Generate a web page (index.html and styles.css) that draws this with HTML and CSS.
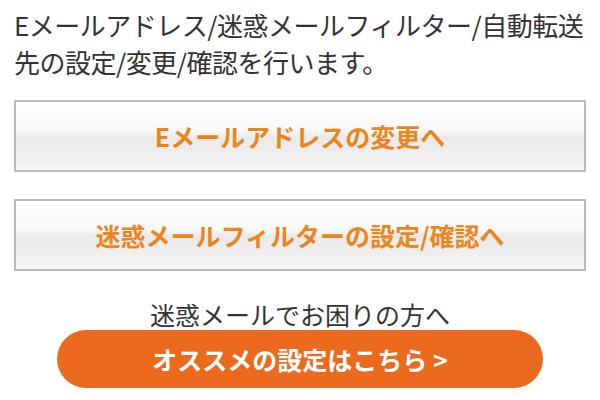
FILE: index.html
```html
<!DOCTYPE html>
<html lang="ja">
<head>
<meta charset="utf-8">
<link rel="stylesheet" href="styles.css">
</head>
<body>
<div class="page">
  <p class="intro">Eメールアドレス/迷惑メールフィルター/自動転送先の設定/変更/確認を行います。</p>
  <a class="btn">Eメールアドレスの変更へ</a>
  <a class="btn">迷惑メールフィルターの設定/確認へ</a>
  <p class="note">迷惑メールでお困りの方へ</p>
  <a class="pill">オススメの設定はこちら &gt;</a>
</div>
</body>
</html>
```
FILE: styles.css
```css
html, body {
  margin: 0;
  padding: 0;
  background: #fff;
}
.page {
  font-family: "Noto Sans CJK JP", "Noto Sans", sans-serif;
  display: flex;
  flex-direction: column;
  padding-top: 6px;
}
.intro {
  margin: 0;
  padding: 0 0 0 14px;
  font-size: 26px;
  line-height: 37px;
  letter-spacing: -0.5px;
  color: #333;
}
.btn {
  display: flex;
  align-items: center;
  justify-content: center;
  box-sizing: border-box;
  height: 72px;
  margin: 20px 14px 0 14px;
  border: 2px solid #b9b9b9;
  background: linear-gradient(to bottom, #fefefe 0%, #f8f8f8 42%, #eaeaea 52%, #eeeeee 75%, #f6f6f6 100%);
  color: #ea861d;
  font-weight: bold;
  font-size: 25px;
}
.btn + .btn {
  margin-top: 27px;
}
.note {
  margin: 28px 0 0 0;
  text-align: center;
  font-size: 25px;
  line-height: 30px;
  color: #333;
}
.pill {
  align-self: center;
  display: flex;
  align-items: center;
  justify-content: center;
  width: 486px;
  height: 58px;
  margin-top: 1px;
  border-radius: 29px;
  background: #ec6a1e;
  color: #fff;
  font-weight: bold;
  font-size: 25px;
}
```
